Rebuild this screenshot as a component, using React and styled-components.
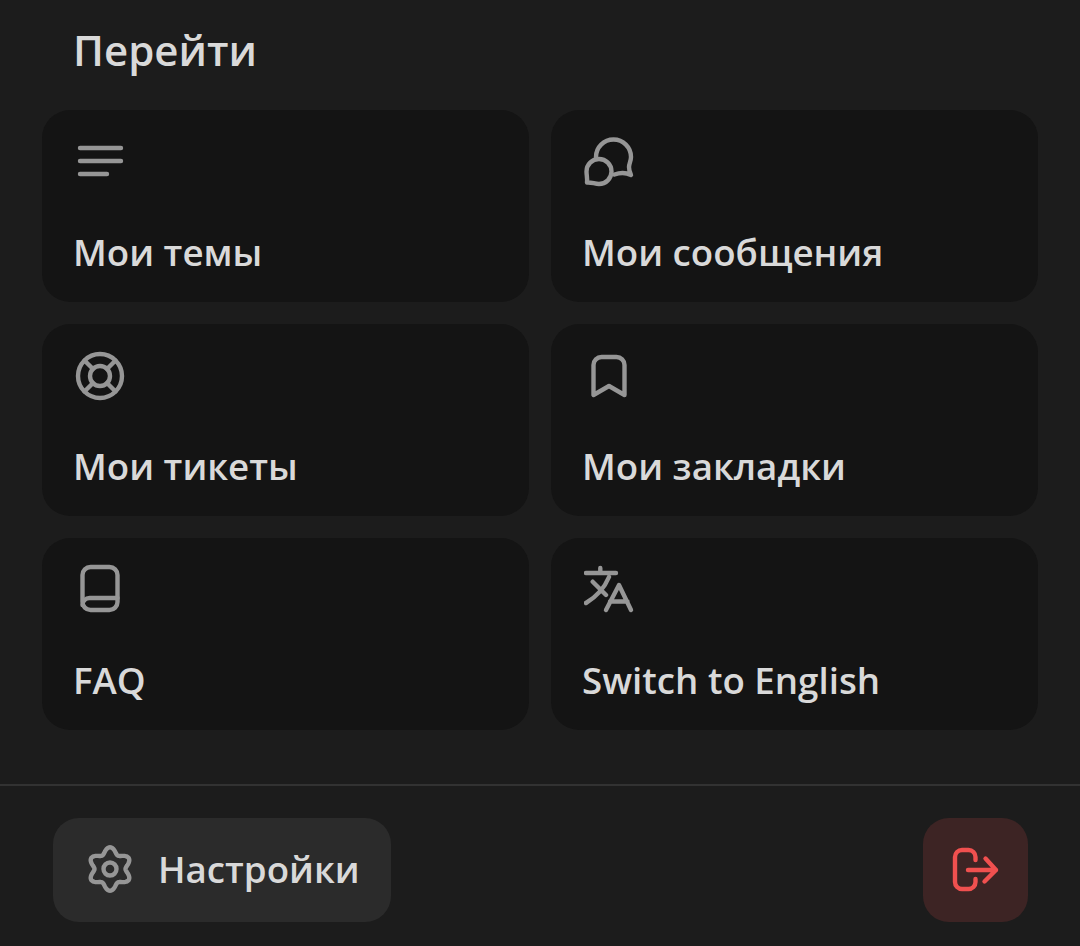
import React from "react";
import styled, { createGlobalStyle } from "styled-components";

const GlobalStyle = createGlobalStyle`
  html, body {
    margin: 0;
    padding: 0;
    background: #1c1c1c;
  }
`;

// six lobed gear outline, traced from a polar curve
const gearPath = () => {
  const points = [];
  for (let i = 0; i < 180; i++) {
    const angle = (i / 180) * Math.PI * 2;
    const radius = 18.6 + 3.1 * Math.cos(6 * angle);
    const x = 24 + radius * Math.sin(angle);
    const y = 24 - radius * Math.cos(angle);
    points.push(`${x.toFixed(2)} ${y.toFixed(2)}`);
  }
  return `M${points.join("L")}Z`;
};

const LinesIcon = () => (
  <Icon viewBox="0 0 56 56">
    <path d="M5 14H46M5 27H46M5 40H32" />
  </Icon>
);

const ChatsIcon = () => (
  <Icon viewBox="0 0 56 56">
    <path d="M12 23A17.5 17.5 0 0 1 47 23C47 27 45 30 45 33C45 36 46 39 47 41C42 38.5 36 38.5 30.5 40.5" />
    <path d="M3 48.5C3.5 45 2.5 41 2.5 37.5A12.5 12.5 0 1 1 15 50C11 50 7 48 3 48.5Z" />
  </Icon>
);

const BuoyIcon = () => (
  <Icon viewBox="0 0 56 56">
    <circle cx="25" cy="28" r="22" />
    <circle cx="25" cy="28" r="10" />
    <path d="M9.5 12.5L18 21M40.5 12.5L32 21M9.5 43.5L18 35M40.5 43.5L32 35" />
  </Icon>
);

const BookmarkIcon = () => (
  <Icon viewBox="0 0 56 56">
    <path d="M9.5 47V17A8 8 0 0 1 17.5 9H32.5A8 8 0 0 1 40.5 17V47L25 38Z" />
  </Icon>
);

const BookIcon = () => (
  <Icon viewBox="0 0 56 56">
    <rect x="7.5" y="5" width="35" height="43" rx="8" />
    <path d="M7.5 43A7 7 0 0 1 14.5 36H42.5" />
  </Icon>
);

const TranslateIcon = () => (
  <Icon viewBox="0 0 56 56">
    <path d="M2 11H32M16.3 6V11M8.7 19.7L22 33M25 15C20 27 12 35 2 41" />
    <path d="M22 48L35 23L47 48M26 39.5H43.5" />
  </Icon>
);

const GearIcon = () => (
  <SmallIcon viewBox="0 0 48 48">
    <path d={gearPath()} />
    <circle cx="24" cy="24" r="6.5" />
  </SmallIcon>
);

const LogoutIcon = () => (
  <ExitIcon viewBox="0 0 56 56">
    <path d="M27.5 18V15A7 7 0 0 0 20.5 8H14A7 7 0 0 0 7 15V40A7 7 0 0 0 14 47H20.5A7 7 0 0 0 27.5 40V37" />
    <path d="M20 28H48M37.5 16.5L48 28L36.5 39.5" />
  </ExitIcon>
);

const items = [
  { label: "Мои темы", icon: <LinesIcon /> },
  { label: "Мои сообщения", icon: <ChatsIcon /> },
  { label: "Мои тикеты", icon: <BuoyIcon /> },
  { label: "Мои закладки", icon: <BookmarkIcon /> },
  { label: "FAQ", icon: <BookIcon /> },
  { label: "Switch to English", icon: <TranslateIcon /> },
];

const App = () => {
  return (
    <>
      <GlobalStyle />
      <Page>
        <Title>Перейти</Title>
        <Grid>
          {items.map((item) => (
            <Card key={item.label}>
              {item.icon}
              <CardLabel>{item.label}</CardLabel>
            </Card>
          ))}
        </Grid>
        <Footer>
          <SettingsButton>
            <GearIcon />
            Настройки
          </SettingsButton>
          <LogoutButton aria-label="Выйти">
            <LogoutIcon />
          </LogoutButton>
        </Footer>
      </Page>
    </>
  );
};

const Page = styled.div`
  width: 1080px;
  height: 946px;
  overflow: hidden;
  background: #1c1c1c;
  font-family: "Open Sans", "Noto Sans", sans-serif;
  color: #d9d9d9;
`;

const Title = styled.h2`
  margin: 0;
  padding: 25px 0 0 73px;
  height: 84px;
  box-sizing: border-box;
  font-size: 42px;
  line-height: 50px;
  font-weight: 600;
`;

const Grid = styled.div`
  display: grid;
  grid-template-columns: 487px 487px;
  grid-auto-rows: 192px;
  gap: 22px;
  padding: 26px 43px 0 42px;
`;

const Card = styled.div`
  box-sizing: border-box;
  padding: 24px 32px 0 33px;
  border-radius: 28px;
  background: #141414;
`;

const CardLabel = styled.div`
  margin: 37px 0 0 -2px;
  font-size: 36.7px;
  line-height: 50px;
  font-weight: 600;
`;

const Icon = styled.svg`
  display: block;
  width: 56px;
  height: 56px;
  fill: none;
  stroke: #969696;
  stroke-width: 4.4;
  stroke-linecap: round;
  stroke-linejoin: round;
`;

const SmallIcon = styled(Icon)`
  width: 48px;
  height: 48px;
`;

const ExitIcon = styled(Icon)`
  stroke: #f0504f;
`;

const Footer = styled.div`
  display: flex;
  justify-content: space-between;
  margin-top: 54px;
  padding: 32px 52px 0 53px;
  border-top: 2px solid #323232;
`;

const SettingsButton = styled.button`
  display: flex;
  align-items: center;
  gap: 24px;
  box-sizing: border-box;
  width: 338px;
  height: 104px;
  padding: 0 0 2px 33px;
  border: none;
  border-radius: 26px;
  background: #2b2b2b;
  color: #d9d9d9;
  font-family: inherit;
  font-size: 36.7px;
  font-weight: 600;
`;

const LogoutButton = styled.button`
  display: flex;
  align-items: center;
  justify-content: center;
  width: 105px;
  height: 104px;
  padding: 0;
  border: none;
  border-radius: 26px;
  background: #3d2424;
`;

export default App;
